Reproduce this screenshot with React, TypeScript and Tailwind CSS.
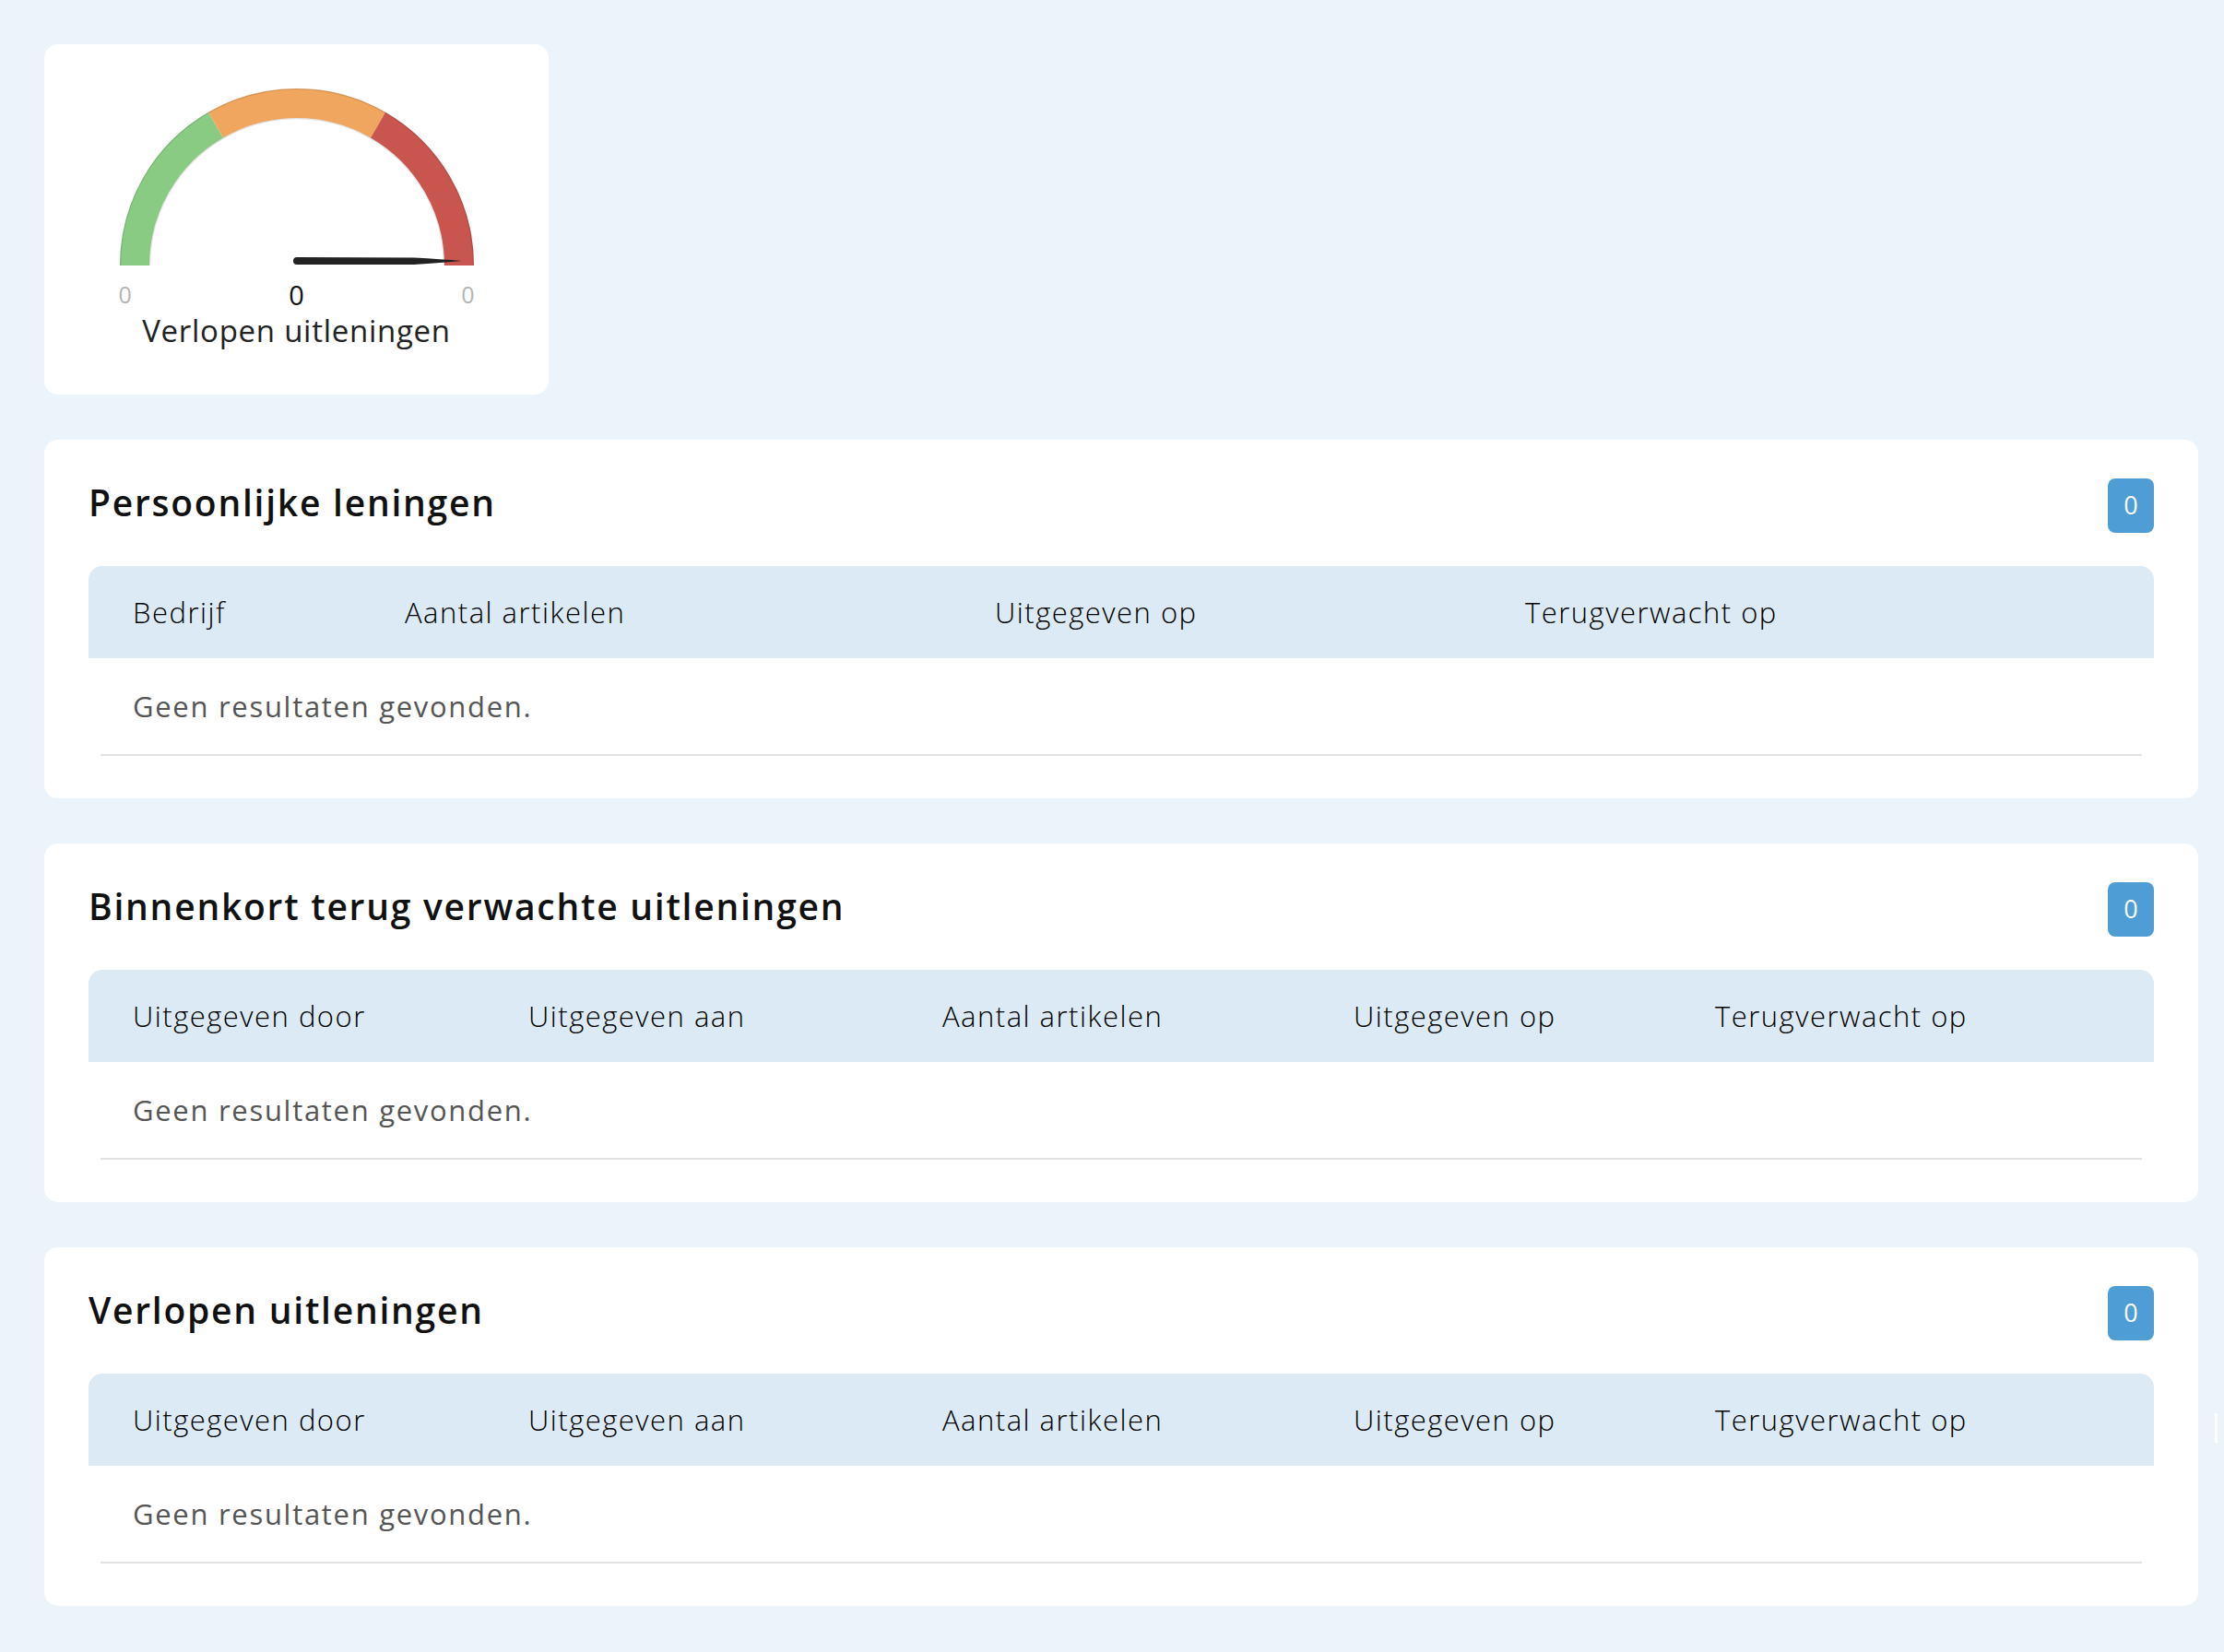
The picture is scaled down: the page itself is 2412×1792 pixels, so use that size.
import React from "react";

type Section = {
  title: string;
  cols: string[];
  grid: string;
};

const sections: Section[] = [
  {
    title: "Persoonlijke leningen",
    cols: ["Bedrijf", "Aantal artikelen", "Uitgegeven op", "Terugverwacht op"],
    grid: "grid-cols-[295px_640px_575px_1fr]",
  },
  {
    title: "Binnenkort terug verwachte uitleningen",
    cols: ["Uitgegeven door", "Uitgegeven aan", "Aantal artikelen", "Uitgegeven op", "Terugverwacht op"],
    grid: "grid-cols-[429px_449px_446px_392px_1fr]",
  },
  {
    title: "Verlopen uitleningen",
    cols: ["Uitgegeven door", "Uitgegeven aan", "Aantal artikelen", "Uitgegeven op", "Terugverwacht op"],
    grid: "grid-cols-[429px_449px_446px_392px_1fr]",
  },
];

function Gauge() {
  return (
    <div className="w-[547px] h-[380px] bg-white rounded-[15px] flex flex-col items-center pt-[44px]">
      <svg width="390" height="196" viewBox="0 0 390 196">
        {/* arc segments, mid radius 176, stroke 32 */}
        <path d="M19 196 A176 176 0 0 1 107 43.58" fill="none" stroke="#8acb84" strokeWidth="32" />
        <path d="M107 43.58 A176 176 0 0 1 283 43.58" fill="none" stroke="#f0a65f" strokeWidth="32" />
        <path d="M283 43.58 A176 176 0 0 1 371 196" fill="none" stroke="#c9554f" strokeWidth="32" />
        {/* faint edges */}
        <path d="M3.5 196 A191.5 191.5 0 0 1 386.5 196" fill="none" stroke="#000" strokeOpacity="0.1" strokeWidth="1.5" />
        <path d="M35.5 196 A159.5 159.5 0 0 1 354.5 196" fill="none" stroke="#000" strokeOpacity="0.1" strokeWidth="1.5" />
        {/* needle */}
        <path
          d="M195 187 L322 187.5 Q352 189 374 191 Q352 193 322 195 L195 195 A4 4 0 0 1 195 187 Z"
          fill="#222"
        />
      </svg>
      <div className="w-[386px] flex justify-between items-center mt-[17px] leading-none">
        <span className="text-[25px] text-[#b4b4b4]">0</span>
        <span className="text-[29px] text-[#111]">0</span>
        <span className="text-[25px] text-[#b4b4b4]">0</span>
      </div>
      <div className="mt-[8px] text-[33px] leading-none tracking-[0.022em] text-[#222]">
        Verlopen uitleningen
      </div>
    </div>
  );
}

function LoanCard({ section }: { section: Section }) {
  return (
    <div className="bg-white rounded-[15px] pt-[42px] px-12 pb-[46px]">
      <div className="flex justify-between items-center h-[59px]">
        <h2 className="mb-[9px] text-[39px] font-semibold tracking-[0.045em] text-[#111] leading-none">
          {section.title}
        </h2>
        <div className="w-[50px] h-[59px] rounded-[8px] bg-[#4e9dd4] text-white text-[27px] flex items-center justify-center">
          0
        </div>
      </div>

      <div className="mt-[36px]">
        <div className={`grid ${section.grid} h-[100px] items-center bg-[#dbeaf4] rounded-t-[15px]`}>
          {section.cols.map((c) => (
            <div key={c} className="pl-12 text-[31px] font-light tracking-[0.048em] text-black">
              {c}
            </div>
          ))}
        </div>
        <div className="h-[104px] flex items-center pl-12 text-[31px] tracking-[0.055em] text-[#555]">
          Geen resultaten gevonden.
        </div>
        <div className="mx-[13px] h-[2px] bg-[#e2e2e2]" />
      </div>
    </div>
  );
}

export default function App() {
  return (
    <div className="relative min-h-screen w-full bg-[#ecf4fb] pl-12 pr-[28px] py-12 font-['Open_Sans',sans-serif]">
      <div className="flex flex-col gap-[49px]">
        <Gauge />
        {sections.map((s) => (
          <LoanCard key={s.title} section={s} />
        ))}
      </div>
      {/* scrollbar sliver at the right edge */}
      <div className="absolute left-[2402px] top-[1533px] w-[3px] h-[32px] bg-white" />
    </div>
  );
}
